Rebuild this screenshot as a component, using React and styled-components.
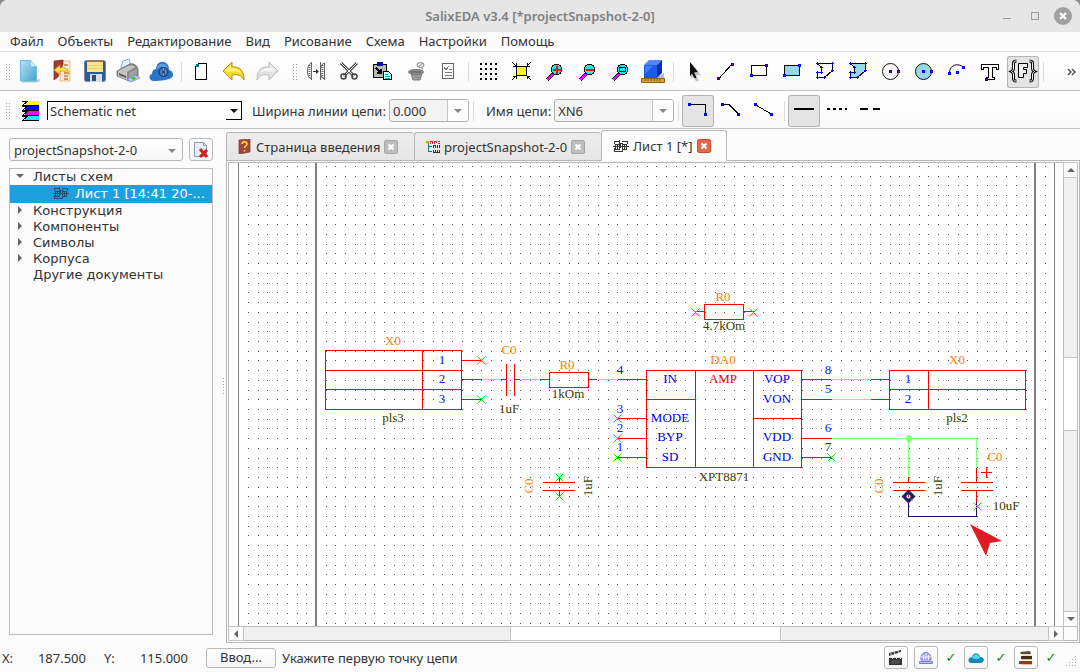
import React from "react";
import styled, { createGlobalStyle } from "styled-components";

const GlobalStyle = createGlobalStyle`
  * {
    box-sizing: border-box;
  }
  html, body, #root {
    height: 100%;
    margin: 0;
  }
  body {
    background: #8c8c8c;
    color: #333;
    font-family: "Noto Sans", "Open Sans", sans-serif;
    font-size: 13px;
  }
  button, input, select {
    font: inherit;
    color: inherit;
    margin: 0;
  }
`;

const Window = styled.div`
  display: flex;
  flex-direction: column;
  min-height: 100vh;
  background: #fbfbfb;
  border-radius: 8px 8px 0 0;
  overflow: hidden;
`;

const TitleBar = styled.header`
  display: grid;
  grid-template-columns: 1fr auto 1fr;
  align-items: center;
  height: 32px;
  padding: 0 7px;
  background: #e6e6e6;
`;

const Title = styled.h1`
  grid-column: 2;
  margin: 0;
  font-size: 13px;
  font-weight: 600;
  color: #808080;
`;

const WindowButtons = styled.div`
  display: flex;
  justify-content: flex-end;
  gap: 8px;
`;

const WindowButton = styled.button`
  display: flex;
  padding: 0;
  border: 0;
  background: none;
`;

const MenuBar = styled.nav`
  display: flex;
  gap: 14px;
  height: 20px;
  padding: 0 10px;
  border-bottom: 1px solid #dcdcdc;
`;

const MenuItem = styled.button`
  padding: 0;
  border: 0;
  background: none;
  line-height: 19px;
`;

const ToolBar = styled.div`
  display: flex;
  align-items: center;
  gap: 1px;
  height: ${props => (props.$tall ? 39 : 38)}px;
  padding-top: 2px;
  border-bottom: 1px solid #c2c2c2;
  background: linear-gradient(#fff, #f9f9f9);
`;

const ToolButton = styled.button`
  display: flex;
  flex: none;
  width: 32px;
  height: 32px;
  padding: 0;
  border: 0;
  border-radius: 3px;
  background: ${props => (props.$pressed ? "#e4e4e4" : "none")};
  box-shadow: ${props => (props.$pressed ? "inset 0 0 0 1px #b4b4b4" : "none")};
`;

const Separator = styled.span`
  flex: none;
  width: 6px;
  height: 20px;
  background: linear-gradient(#dcdcdc, #dcdcdc) 3px 0 / 1px 100% no-repeat;
`;

const Handle = styled.span`
  flex: none;
  align-self: center;
  width: ${props => (props.$inner ? 15 : 12)}px;
  height: 18px;
  padding-left: ${props => (props.$inner ? 8 : 5)}px;
  &::before {
    content: "";
    display: block;
    width: 5px;
    height: 17px;
    background: radial-gradient(circle, #aaa 1px, transparent 1px) 0 0 / 3px 3px;
  }
`;

const More = styled.button`
  display: flex;
  margin-left: auto;
  padding: 0 4px;
  border: 0;
  background: none;
`;

const LayerSelect = styled.div`
  position: relative;
  flex: none;
  width: 195px;
  height: 19px;
  border-top: 1px solid #000;
  border-left: 1px solid #000;
  background: #fff;
  select {
    appearance: none;
    width: 100%;
    height: 18px;
    padding: 0 20px 0 2px;
    border: 0;
    background: none;
    line-height: 18px;
  }
`;

const LayerArrow = styled.span`
  position: absolute;
  top: 0;
  right: 0;
  display: flex;
  align-items: center;
  justify-content: center;
  width: 16px;
  height: 18px;
  border-right: 1px solid #000;
  border-bottom: 1px solid #000;
  pointer-events: none;
`;

const FieldLabel = styled.label`
  flex: none;
  padding: 0 2px 0 9px;
  white-space: nowrap;
`;

const ComboBox = styled.div`
  display: flex;
  flex: none;
  width: ${props => props.$width}px;
  height: 23px;
  border: 1px solid #b2b2b2;
  border-radius: 3px;
  background: #f4f4f4;
  overflow: hidden;
  input {
    flex: 1;
    min-width: 0;
    padding: 0 3px;
    border: 0;
    background: none;
  }
  button {
    display: flex;
    align-items: center;
    justify-content: center;
    width: 21px;
    padding: 0;
    border: 0;
    border-left: 1px solid #c4c4c4;
    background: #fcfcfc;
  }
`;

const Main = styled.main`
  display: flex;
  flex: 1;
  min-height: 0;
`;

const SidePanel = styled.aside`
  display: flex;
  flex: none;
  flex-direction: column;
  gap: 7px;
  width: 213px;
  padding: 9px 0 8px 9px;
`;

const ProjectRow = styled.div`
  display: flex;
  gap: 6px;
`;

const ProjectSelect = styled.div`
  position: relative;
  flex: 1;
  select {
    appearance: none;
    width: 100%;
    height: 23px;
    padding: 0 4px;
    border: 1px solid #b8b8b8;
    border-radius: 3px;
    background: linear-gradient(#fff, #f6f6f6);
  }
  svg {
    position: absolute;
    right: 7px;
    top: 9px;
    pointer-events: none;
  }
`;

const SmallButton = styled.button`
  display: flex;
  align-items: center;
  justify-content: center;
  flex: none;
  width: 24px;
  height: 23px;
  padding: 0;
  border: 1px solid #b8b8b8;
  border-radius: 3px;
  background: linear-gradient(#fff, #f6f6f6);
`;

const Tree = styled.ul`
  flex: 1;
  margin: 0;
  padding: 0;
  border: 1px solid #bcbcbc;
  list-style: none;
  font-family: "DejaVu Sans", sans-serif;
`;

const TreeRow = styled.li`
  display: flex;
  align-items: center;
  height: ${props => (props.$selected ? 18 : 16)}px;
  padding-bottom: 2px;
  padding-left: ${props => (props.$selected ? 43 : 6)}px;
  gap: ${props => (props.$selected ? 6 : 9)}px;
  background: ${props => (props.$selected ? "#209fdf" : "none")};
  color: ${props => (props.$selected ? "#fff" : "#333")};
  white-space: nowrap;
`;

const Splitter = styled.div`
  display: flex;
  align-items: center;
  justify-content: flex-end;
  width: 13px;
  padding-right: 2px;
  &::before {
    content: "";
    width: 1px;
    height: 16px;
    background: repeating-linear-gradient(#aaa 0 1px, transparent 1px 3px);
  }
`;

const Workspace = styled.section`
  display: flex;
  flex: 1;
  flex-direction: column;
  min-width: 0;
  padding-top: 2px;
`;

const TabList = styled.div`
  display: flex;
  align-items: flex-end;
  height: 30px;
  border-bottom: 1px solid #b8b8b8;
`;

const Tab = styled.div`
  display: flex;
  flex: none;
  align-items: center;
  gap: 4px;
  width: ${props => props.$width}px;
  height: ${props => (props.$active ? 31 : 28)}px;
  margin-bottom: ${props => (props.$active ? -1 : 0)}px;
  padding: 0 11px;
  border: 1px solid #b8b8b8;
  border-bottom: 0;
  border-right-width: ${props => (props.$active ? 1 : 0)}px;
  border-radius: 3px 3px 0 0;
  background: ${props => (props.$active ? "#fcfcfc" : "linear-gradient(#ededed, #e6e6e6)")};
`;

const TabLabel = styled.button`
  display: flex;
  align-items: center;
  gap: 4px;
  padding: 0;
  border: 0;
  background: none;
  white-space: nowrap;
`;

const TabClose = styled.button`
  display: flex;
  padding: 0;
  border: 0;
  background: none;
`;

const Pane = styled.div`
  display: flex;
  flex: 1;
  min-height: 0;
  padding: 1px;
  border: 1px solid #b8b8b8;
  border-top: 0;
`;

const ScrollArea = styled.div`
  display: grid;
  flex: 1;
  grid-template-columns: minmax(0, 1fr) 14px;
  grid-template-rows: minmax(0, 1fr) 14px;
  border: 1px solid #b8b8b8;
`;

const Canvas = styled.svg`
  display: block;
  width: 100%;
  height: 100%;
  background: #fff;
  font-family: "Liberation Serif", serif;
  font-size: 13px;
  text-anchor: middle;
`;

const ScrollBar = styled.div`
  display: flex;
  flex-direction: ${props => (props.$vertical ? "column" : "row")};
  border: 0 solid #bcbcbc;
  border-left-width: ${props => (props.$vertical ? 1 : 0)}px;
  border-top-width: ${props => (props.$vertical ? 0 : 1)}px;
  background: #f0f0f0;
  button {
    display: flex;
    align-items: center;
    justify-content: center;
    flex: none;
    width: ${props => (props.$vertical ? 13 : 14)}px;
    height: ${props => (props.$vertical ? 14 : 13)}px;
    padding: 0;
    border: 0;
    background: #fcfcfc;
    box-shadow: 0 0 0 1px #c4c4c4;
  }
`;

const Track = styled.div`
  flex: ${props => props.$size} 0 0;
`;

const Thumb = styled.div`
  flex: ${props => props.$size} 0 0;
  background: #fff;
  box-shadow: 0 0 0 1px #c4c4c4;
`;

const Corner = styled.div`
  border: solid #bcbcbc;
  border-width: 1px 0 0 1px;
`;

const StatusBar = styled.footer`
  display: flex;
  align-items: center;
  height: 29px;
  padding: 0 2px;
`;

const Coordinate = styled.output`
  display: flex;
  justify-content: space-between;
  width: ${props => props.$width}px;
  margin-right: 18px;
`;

const PromptButton = styled.button`
  width: 70px;
  height: 20px;
  margin-right: 6px;
  padding: 0;
  border: 1px solid #b8b8b8;
  border-radius: 3px;
  background: linear-gradient(#fff, #f6f6f6);
  line-height: 17px;
`;

const Services = styled.div`
  display: flex;
  align-items: center;
  gap: 6px;
  margin-left: auto;
`;

const Check = styled.span`
  width: 14px;
  color: #0a8a0a;
  font-family: "DejaVu Sans", sans-serif;
  font-size: 13px;
  text-align: center;
`;

const Grip = styled.svg`
  align-self: flex-end;
`;

const Arrow = ({ dir = "down", color = "#666", size = 8 }) => {
  const turn = { down: 0, left: 90, up: 180, right: 270 }[dir];
  return (
    <svg width={size} height={size} viewBox="0 0 8 8" aria-hidden="true">
      <path d="M0 2h8L4 6z" fill={color} transform={`rotate(${turn} 4 4)`} />
    </svg>
  );
};

const Glyph = ({ children, crisp }) => (
  <svg
    width="32"
    height="32"
    viewBox="0 0 32 32"
    fill="none"
    shapeRendering={crisp ? "crispEdges" : "auto"}
    aria-hidden="true"
  >
    {children}
  </svg>
);

// square vertex markers of the drawing tools
const Node = ({ at, core = "#e00040" }) =>
  at.map(([x, y]) => (
    <g key={`${x}-${y}`}>
      <path d={`M${x - 1} ${y - 1}h3v3h-3z`} fill="#0000f0" />
      <path d={`M${x} ${y}h1v1h-1z`} fill={core} />
    </g>
  ));

const Magnifier = ({ children }) => (
  <Glyph crisp>
    <path d="M9 24l7-7" stroke="#000" strokeWidth="4" />
    <path d="M9 24l6-6" stroke="#f0f" strokeWidth="2" />
    <path d="M16 8h5v1h2v2h1v5h-1v2h-2v1h-5v-1h-2v-2h-1v-5h1V9h2z" fill="#000" />
    <path d="M16 9h5v1h1v1h1v5h-1v1h-1v1h-5v-1h-1v-1h-1v-5h1v-1h1z" fill="#1ee" />
    {children}
  </Glyph>
);

const Polygon = ({ fill }) => (
  <Glyph crisp>
    <path d="M8.500 7.500h15v7l-8 7h-7v-5h4v-5z" fill={fill} stroke="#000" />
    {[[8, 7], [23, 7], [12, 11], [8, 16], [12, 16], [23, 14], [15, 21], [8, 21]].map(([x, y]) => (
      <path key={`${x}-${y}`} d={`M${x - 1} ${y + 0.5}h3M${x + 0.5} ${y - 1}v3`} stroke="#0000f0" />
    ))}
  </Glyph>
);

const icons = {
  file: (
    <Glyph>
      <defs>
        <linearGradient id="fileFill" x2="1" y2="1">
          <stop stopColor="#b9e2f3" />
          <stop offset="1" stopColor="#3fa3cc" />
        </linearGradient>
      </defs>
      <path d="M10 24h14l3-1v2l-3 1.500H9z" fill="#c4c9cc" />
      <path d="M7.500 4.500h10l6 6V25h-16z" fill="url(#fileFill)" stroke="#6fbbdc" />
      <path d="M17.500 4.500v6h6z" fill="#d9f1fb" stroke="#8ccbe5" />
    </Glyph>
  ),
  open: (
    <Glyph>
      <path d="M14 5h10v20H14z" fill="#f6ecd8" stroke="#e4b987" />
      <path d="M18 9h4M18 14h4M18 17h4M18 20h4M18 23h4" stroke="#c8783b" strokeWidth="1.500" />
      <path d="M8 5l9-1v4l-5 13-4 3z" fill="#a03c38" stroke="#7a2624" strokeWidth=".7" />
      <path d="M8 14l6-5v3c5-1 8 1 9 6-3-3-5-3-9-3v4z" fill="#ffe14a" stroke="#c88e16" strokeWidth=".7" />
    </Glyph>
  ),
  save: (
    <Glyph>
      <rect x="5.500" y="4.500" width="21" height="21" rx="2" fill="#2a5c9c" stroke="#7d8597" />
      <path d="M8 5h16v11H8z" fill="#fbe68b" />
      <path d="M8 5.500h16" stroke="#b9683c" />
      <path d="M8 9.500h16M8 12.500h16" stroke="#efcb5c" />
      <path d="M11 18h12v8H11z" fill="#d8dde4" />
      <path d="M13 19h4v6h-4z" fill="#274f80" />
    </Glyph>
  ),
  print: (
    <Glyph>
      <path d="M9 12l2-7 6-2 2 8z" fill="#eaf4fc" stroke="#86abcf" />
      <path d="M5 15l7-4 6-3c4-1 8 2 8 6v6l-9 5-12-5z" fill="#8a8a8a" stroke="#666" strokeWidth=".8" />
      <path d="M6 15l8-4c4-2 7-2 9 0l-8 5v8l-9-4z" fill="#c4c4c4" />
      <path d="M7 17l7 3v2l-7-3z" fill="#555" />
      <path d="M17 17l8-4v5l-8 4z" fill="#a0a0a0" />
      <path d="M15 23l9-4 4 3-9 4z" fill="#aac8ef" stroke="#7989b0" strokeWidth=".7" />
      <path d="M19 22l4-1 1 2-3 1z" fill="#3db53d" />
      <path d="M23 21l3 1-2 1z" fill="#f0c83c" />
    </Glyph>
  ),
  cloud: (
    <Glyph>
      <path d="M9 25c-5 0-6-6-2-7 0-4 3-5 4-5 0-6 6-9 10-6 3 2 3 5 3 7 5 1 5 7 2 8-3 2-10 3-17 3z" fill="#2a74c9" />
      <path d="M11 14c1-6 7-8 10-5 1 1 2 3 1 4-3-4-8-2-11 1z" fill="#639ee4" />
      <circle cx="18.500" cy="16" r="4.500" fill="#2b5fa0" stroke="#1d4170" strokeWidth="1.200" />
      <path d="M18.500 12v8M15 16h7M16 13.500l5 5M21 13.500l-5 5" stroke="#9db9dd" strokeWidth=".8" />
      <circle cx="18.500" cy="16" r="1.500" fill="#173c69" />
    </Glyph>
  ),
  page: (
    <Glyph crisp>
      <path d="M14 7h8v17H10V11" fill="#fff" />
      <path d="M14 7.500h7.500v16h-11v-13z" stroke="#000" />
      <path d="M11 8h3v3h-3z" fill="#008080" />
    </Glyph>
  ),
  undo: (
    <Glyph>
      <path d="M5 15l9-9v5c8-1 12 4 12 13-3-5-6-6-12-5v5z" fill="#f9d92c" stroke="#b88c12" />
      <path d="M7 15l6-6v3c5 0 8 1 10 5-4-2-7-2-11-1z" fill="#fff07a" />
    </Glyph>
  ),
  redo: (
    <Glyph>
      <path d="M27 15l-9-9v5C10 10 6 15 6 24c3-5 6-6 12-5v5z" fill="#e2e2e2" stroke="#bcbcbc" />
      <path d="M25 15l-6-6v3c-5 0-8 1-10 5 4-2 7-2 11-1z" fill="#f3f3f3" />
    </Glyph>
  ),
  mirror: (
    <Glyph>
      <path d="M11.500 6v18M11.500 7c-3 1-4 4-4 8s1 7 4 8M20.500 6v18M24.500 7v17M24.500 7c-3 1-4 4-4 8s1 7 4 8" stroke="#555" strokeWidth=".9" />
      <path d="M9.500 9v13M22.500 9v13" stroke="#666" strokeDasharray="1 1" strokeWidth="2" />
      <path d="M13 15.500h5" stroke="#333" />
      <path d="M16 13l3 2.500-3 2.500z" fill="#333" />
    </Glyph>
  ),
  cut: (
    <Glyph>
      <path d="M8 7l13 13M24 7L11 20" stroke="#4c4c4c" strokeWidth="3" />
      <path d="M8 7l13 13M24 7L11 20" stroke="#f4f4f4" />
      <circle cx="10.500" cy="20.500" r="2.500" stroke="#444" strokeWidth="1.500" />
      <circle cx="21.500" cy="20.500" r="2.500" stroke="#444" strokeWidth="1.500" />
    </Glyph>
  ),
  paste: (
    <Glyph crisp>
      <path d="M7.500 8.500h13v13h-13z" fill="#b8b8b8" stroke="#000" />
      <path d="M11 6h6v4h-6z" fill="#0010a0" />
      <path d="M10 12l5 5M15 13v4h-4" stroke="#000" strokeWidth="2" />
      <path d="M17.500 15.500h5l3 3v5h-8z" fill="#dff" stroke="#000" />
      <path d="M19 18h3M19 20h5M19 22h5" stroke="#00a8d0" />
    </Glyph>
  ),
  bucket: (
    <Glyph>
      <path d="M12 17h11l-2 7h-7z" fill="#9a9a9a" stroke="#7a7a7a" />
      <ellipse cx="17" cy="16" rx="7.500" ry="2.500" fill="#8c8c8c" stroke="#777" />
      <path d="M12 16h10" stroke="#5a5a5a" />
      <ellipse cx="21.500" cy="9" rx="3.500" ry="2.500" fill="#eee" stroke="#888" />
      <path d="M19 11l5-4M23 12v2" stroke="#888" />
    </Glyph>
  ),
  list: (
    <Glyph crisp>
      <path d="M10.500 7.500h11v15h-11z" fill="#fff" stroke="#666" />
      <path d="M12 11l2 3 3-4M17 13.500h3M13 16.500h7M13 19.500h7" stroke="#777" />
    </Glyph>
  ),
  grid: (
    <Glyph crisp>
      {[7, 12, 17, 22].map(y => (
        <path key={y} d={`M8 ${y}h2v2h-2zM13 ${y}h2v2h-2zM18 ${y}h2v2h-2zM23 ${y}h2v2h-2z`} fill="#000" />
      ))}
    </Glyph>
  ),
  fit: (
    <Glyph crisp>
      <path d="M11.500 10.500h10v9h-10z" fill="#ff0" stroke="#000" />
      <path d="M7 6l4 4M26 6l-4 4M7 24l4-4M26 24l-4-4M8 10h3V7M25 10h-3V7M8 20h3v3M25 20h-3v3" stroke="#000" />
    </Glyph>
  ),
  zoomIn: (
    <Magnifier>
      <path d="M18 10h2v3h3v2h-3v3h-2v-3h-3v-2h3z" fill="#f01010" />
    </Magnifier>
  ),
  zoomOut: (
    <Magnifier>
      <path d="M15 13h8v2h-8z" fill="#f01010" />
    </Magnifier>
  ),
  zoomFit: (
    <Magnifier>
      <path d="M15.500 11.500h6v4h-6z" stroke="#000" />
    </Magnifier>
  ),
  cube: (
    <Glyph>
      <path d="M20 22l7-5v5l-5 2z" fill="#bbb" />
      <path d="M7 9h13v13H7z" fill="#2258ea" />
      <path d="M7 9l5-5h13l-5 5z" fill="#5287f8" />
      <path d="M20 9l5-5v13l-5 5z" fill="#102fae" />
      <path d="M8 10l8 0-8 8z" fill="#4579f5" />
      <path d="M4.500 22.500h23v4h-23z" fill="#d7a331" stroke="#8d6416" />
      <path d="M8 23v2M11 23v2M14 23v2M17 23v2M20 23v2M23 23v2" stroke="#7a5410" />
    </Glyph>
  ),
  pointer: (
    <Glyph>
      <path d="M15 8l9 11-5 .5 3 5-3 1-2.500-5-2.500 3z" fill="#c4c4c4" />
      <path d="M13 6l8 10-4 .5 2.500 5-2 1-2.500-5-2 3z" fill="#111" />
    </Glyph>
  ),
  line: (
    <Glyph crisp>
      <path d="M9 22.500L22 8" stroke="#000" />
      <Node at={[[8, 22], [22, 8]]} />
    </Glyph>
  ),
  rect: (
    <Glyph crisp>
      <path d="M8.500 9.500h15v10h-15z" fill="#fff" stroke="#000" />
      <Node at={[[8, 19], [23, 9]]} />
    </Glyph>
  ),
  rectFill: (
    <Glyph crisp>
      <path d="M8.500 9.500h15v10h-15z" fill="#94d8ea" stroke="#000" />
      <Node at={[[8, 19], [23, 9]]} />
    </Glyph>
  ),
  poly: <Polygon fill="#fff" />,
  polyFill: <Polygon fill="#94d8ea" />,
  circle: (
    <Glyph>
      <circle cx="15.500" cy="15.500" r="8" stroke="#111" />
      <Node at={[[15, 15], [23, 15]]} />
    </Glyph>
  ),
  circleFill: (
    <Glyph>
      <circle cx="15.500" cy="15.500" r="8" fill="#94d8ea" stroke="#111" />
      <Node at={[[15, 15], [23, 15]]} />
    </Glyph>
  ),
  arc: (
    <Glyph>
      <path d="M8.500 17c0-9 9-10 14-6" stroke="#111" />
      <Node at={[[8, 17], [22, 11], [16, 16]]} />
    </Glyph>
  ),
  text: (
    <Glyph crisp>
      <path d="M7.500 8.500h17v5h-2v-2h-4v10h2v2h-8v-2h2v-10h-5v2h-2z" fill="#fff" stroke="#000" />
      <Node at={[[12, 23]]} />
    </Glyph>
  ),
  formula: (
    <Glyph>
      <path d="M9.500 5c-3 0-3 1-3 4v3c0 2-1 3-2 3.500 1 .5 2 1.500 2 3.500v3c0 2 0 3 3 3M22.500 5c3 0 3 1 3 4v3c0 2 1 3 2 3.500-1 .5-2 1.500-2 3.500v3c0 2 0 3-3 3" stroke="#000" strokeWidth="3" />
      <path d="M9.500 5c-3 0-3 1-3 4v3c0 2-1 3-2 3.500 1 .5 2 1.500 2 3.500v3c0 2 0 3 3 3M22.500 5c3 0 3 1 3 4v3c0 2 1 3 2 3.500-1 .5-2 1.500-2 3.500v3c0 2 0 3-3 3" stroke="#fff" />
      <path d="M11.500 7.500h9v4h-4v2h3v4h-3v4h-5z" fill="#eee" stroke="#000" />
    </Glyph>
  ),
  wireCorner: (
    <Glyph crisp>
      <path d="M7 9.500h16.500v10" stroke="#000" />
      <Node core="#0000f0" at={[[7, 9], [23, 19]]} />
    </Glyph>
  ),
  wireBevel: (
    <Glyph crisp>
      <path d="M7 9.500h7l10 10" stroke="#000" />
      <Node core="#0000f0" at={[[7, 9], [23, 19]]} />
    </Glyph>
  ),
  wireFree: (
    <Glyph crisp>
      <path d="M7 9.500l17 10" stroke="#000" />
      <Node core="#0000f0" at={[[7, 9], [23, 19]]} />
    </Glyph>
  ),
  solid: (
    <Glyph crisp>
      <path d="M6 14h20" stroke="#000" strokeWidth="2" />
    </Glyph>
  ),
  dotted: (
    <Glyph crisp>
      <path d="M6 14h20" stroke="#000" strokeWidth="2" strokeDasharray="3 3" />
    </Glyph>
  ),
  dashed: (
    <Glyph crisp>
      <path d="M6 14h8M19 14h7" stroke="#000" strokeWidth="2" />
    </Glyph>
  ),
};

const LayersIcon = () => (
  <svg width="33" height="20" viewBox="0 0 33 20" shapeRendering="crispEdges" aria-hidden="true">
    {["#ff0", "#00f", "#f0f", "#0ff"].map((color, i) => (
      <g key={color} transform={`translate(9 ${i * 5 - 1})`}>
        <path d="M6 1h11v4H2z" fill={color} />
        <path d="M0 5.500h17M0 1.500h6M5 2l-4 3" stroke="#000" fill="none" />
      </g>
    ))}
  </svg>
);

const SheetIcon = ({ color = "#333" }) => (
  <svg width="16" height="14" viewBox="0 0 16 14" fill="none" stroke={color} shapeRendering="crispEdges" aria-hidden="true">
    <path d="M1.500 5V2.500h5M9 2.500h5.500V5M6.500 1v3h3M2.500 5.500h4v5h-4zM9.500 5.500h4v5h-4zM0 7.500h16M1.500 9v3.500h7.500V9M4.500 6v4M11.500 6v4M7.500 5v4" />
  </svg>
);

const HelpBookIcon = () => (
  <svg width="14" height="15" viewBox="0 0 14 15" aria-hidden="true">
    <path d="M1 1l11-1v13l-11 2z" fill="#a2473f" stroke="#7c332f" strokeWidth=".7" />
    <path d="M4 5c0-3 5-3 5 0 0 2-2.500 2-2.500 4M6.500 11v1.500" stroke="#ffdf36" strokeWidth="1.500" fill="none" />
  </svg>
);

const ProjectIcon = () => (
  <svg width="14" height="14" viewBox="0 0 14 14" fill="none" shapeRendering="crispEdges" aria-hidden="true">
    <path d="M0 1.500h3" stroke="#b8a400" strokeWidth="2" />
    <path d="M4.500 1v3M6.500 1v3M5 1.500h1M8.500 1v3M9 1.500h2M10.500 1v2M12 1.500h2M12 3.500h2" stroke="#c03040" />
    <path d="M2.500 3v9M2 6.500h4M2 11.500h4" stroke="#087878" />
    <path d="M7.500 5v3M9.500 5v3M8 5.500h1M11.500 5v3M13.500 5v3M7.500 10v3M9.500 10v3M11.500 10v3M13.500 10v3M8 12.500h5" stroke="#333" />
  </svg>
);

const CloseIcon = ({ active }) => (
  <svg width="14" height="14" viewBox="0 0 14 14" aria-hidden="true">
    <rect x=".5" y=".5" width="13" height="13" rx="1.500" fill={active ? "#e2694a" : "#bdbdbd"} stroke={active ? "#d44b2b" : "#a6a6a6"} />
    <path d="M4.500 4.500l5 5M9.500 4.500l-5 5" stroke="#fff" strokeWidth="2.200" />
  </svg>
);

const DeletePageIcon = () => (
  <svg width="18" height="18" viewBox="0 0 18 18" aria-hidden="true">
    <path d="M2.500 1.500h9l3 3v11h-12z" fill="#e7eef8" stroke="#8b99b0" />
    <path d="M11.500 1.500v3h3" fill="none" stroke="#8b99b0" />
    <path d="M8 8l7 8M15 9l-7 7" stroke="#d81c1c" strokeWidth="3" />
  </svg>
);

const MAIN_TOOLS = [
  ["file", "Новый"], ["open", "Открыть"], ["save", "Сохранить"], ["print", "Печать"], ["cloud", "Облако"], "sep",
  ["page", "Лист"], ["undo", "Отменить"], ["redo", "Повторить"], "handle",
  ["mirror", "Отразить"], ["cut", "Вырезать"], ["paste", "Вставить"], ["bucket", "Удалить"], ["list", "Свойства"], "sep",
  ["grid", "Сетка"], ["fit", "Вписать"], ["zoomIn", "Увеличить"], ["zoomOut", "Уменьшить"], ["zoomFit", "Окно"], ["cube", "3D"], "sep",
  ["pointer", "Выбор"], ["line", "Линия"], ["rect", "Прямоугольник"], ["rectFill", "Заполненный прямоугольник"],
  ["poly", "Полигон"], ["polyFill", "Заполненный полигон"], ["circle", "Окружность"], ["circleFill", "Круг"],
  ["arc", "Дуга"], ["text", "Текст"], ["formula", "Цепь", true], "sep",
];

const WIRE_TOOLS = [
  ["wireCorner", "Прямой угол", true], ["wireBevel", "Скос"], ["wireFree", "Произвольно"], "sep",
  ["solid", "Сплошная", true], ["dotted", "Точечная"], ["dashed", "Пунктир"],
];

const MENU = ["Файл", "Объекты", "Редактирование", "Вид", "Рисование", "Схема", "Настройки", "Помощь"];
const FOLDERS = ["Конструкция", "Компоненты", "Символы", "Корпуса"];

function Tools({ items }) {
  return items.map((item, i) => {
    if (item === "sep") return <Separator key={i} />;
    if (item === "handle") return <Handle key={i} $inner />;
    const [name, label, pressed] = item;
    return (
      <ToolButton key={name} aria-label={label} $pressed={pressed}>
        {icons[name]}
      </ToolButton>
    );
  });
}

const STEP = 9.72;
const gridPath = () => {
  let d = "";
  for (let row = 0; row < 48; row++) {
    for (let col = 0; col < 83; col++) {
      d += `M${Math.round(248 + col * STEP) - 0.5} ${Math.round(166 + row * STEP)}h1`;
    }
  }
  return d;
};
const GRID = gridPath();

const LABELS = [
  ["X0", 393, 345, "name"], ["C0", 509, 354, "name"], ["R0", 567, 369, "name"], ["R0", 723, 301, "name"],
  ["DA0", 723, 364, "name"], ["X0", 957, 364, "name"], ["C0", 995, 461, "name"],
  ["C0", 533, 486, "name", true], ["C0", 883, 486, "name", true],
  ["pls3", 393, 422, "value"], ["1uF", 509, 413, "value"], ["1kOm", 568, 398, "value"], ["4.7kOm", 724, 330, "value"],
  ["XPT8871", 724, 481, "value"], ["pls2", 957, 422, "value"], ["10uF", 1006, 510, "value"],
  ["1uF", 592, 486, "value", true], ["1uF", 942, 486, "value", true],
  ["1", 442, 364, "pin"], ["2", 442, 383, "pin"], ["3", 442, 403, "pin"],
  ["4", 620, 374, "pin"], ["3", 620, 413, "pin"], ["2", 620, 432, "pin"], ["1", 620, 451, "pin"],
  ["8", 828, 374, "pin"], ["5", 828, 393, "pin"], ["6", 828, 432, "pin"], ["7", 828, 451, "pin"],
  ["1", 908, 383, "pin"], ["2", 908, 403, "pin"],
  ["IN", 670, 383, "port"], ["MODE", 670, 422, "port"], ["BYP", 670, 441, "port"], ["SD", 670, 461, "port"],
  ["VOP", 777, 383, "port"], ["VON", 777, 403, "port"], ["VDD", 777, 441, "port"], ["GND", 777, 461, "port"],
  ["AMP", 723, 383, "title"],
];

const INK = { name: "#ff8000", value: "#404000", pin: "#0020ff", port: "#0000e6", title: "#e60000" };

const FREE_PINS = [
  [481, 360], [481, 399], [617, 418], [617, 438], [617, 457], [559, 477], [559, 496],
  [695, 312], [753, 312], [831, 457], [977, 506],
];

function Schematic() {
  return (
    <Canvas role="img" aria-label="Лист 1">
      <g transform="translate(-228.500 -162.500)" fill="none">
        <g shapeRendering="crispEdges">
          <path d={GRID} stroke="#555" />
          <path d="M238 160v2000M1054 160v2000" stroke="#808080" />
          <path d="M315.500 160v2000M1034.500 160v2000" stroke="#808080" strokeWidth="2" />
          <path
            d="M481 379h20M520 379h20M597 379h21M831 379h40M831 399h40M831 438h145v30M908 438v39"
            stroke="#80ff80"
          />
          <g stroke="#f00" strokeLinecap="square">
            <path d="M325 350h136v59H325zM325 370h136M325 389h136M422 350v59M461 360h20M461 379h20M461 399h20" />
            <path d="M501 379h5M506 364v31M514 364v31M514 379h5M540 379h9M549 372h39v15h-39zM588 379h8" />
            <path d="M543 482h31M543 490h31M559 477v5M559 490v6" />
            <path d="M704 304h39v15h-39zM695 311h9M743 311h10" />
            <path d="M646 370h155v97H646zM695 370v97M753 370v97M646 399h49M753 418h48" />
            <path d="M618 379h28M617 418h29M617 438h29M617 457h29M801 379h29M801 399h29M801 438h29M801 457h30" />
            <path d="M871 379h18M871 399h18M889 370h136v39H889zM889 389h136M928 370v39" />
            <path d="M908 477v5M893 482h31M893 490h31M908 490v6M976 468v14M961 482h31M961 490h31M976 490v16M981 472h10M986 467v10" />
          </g>
          <path d="M908 496v20h68v-15" stroke="#1c1468" />
        </g>
        {FREE_PINS.map(([x, y]) => (
          <path key={`${x}-${y}`} d={`M${x - 4} ${y - 4}l8 8M${x + 4} ${y - 4}l-8 8`} stroke="#00e600" />
        ))}
        <circle cx="908.500" cy="438" r="3.200" fill="#80ff80" />
        <path d="M908 489l7 7-7 7-7-7z" fill="#251b6c" />
        <circle cx="908" cy="496" r="2" fill="#fff" />
        <path d="M908 494v3" stroke="#e02020" />
        <path d="M910 498l2 2" stroke="#00c000" />
      </g>
      <g transform="translate(-229 -163)">
        {LABELS.map(([text, x, y, kind, upright]) => (
          <text key={`${x}-${y}`} x={x} y={y} fill={INK[kind]} transform={upright ? `rotate(-90 ${x} ${y})` : undefined}>
            {text}
          </text>
        ))}
        <path d="M970 524l32 17-12 2-4 13z" fill="#e01b24" />
      </g>
    </Canvas>
  );
}

function App() {
  return (
    <Window>
      <GlobalStyle />
      <TitleBar>
        <Title>SalixEDA v3.4 [*projectSnapshot-2-0]</Title>
        <WindowButtons>
          <WindowButton aria-label="Свернуть">
            <svg width="20" height="20" viewBox="0 0 20 20"><path d="M6 12.500h8" stroke="#999" /></svg>
          </WindowButton>
          <WindowButton aria-label="Развернуть">
            <svg width="20" height="20" viewBox="0 0 20 20"><path d="M6.500 6.500h7v7h-7z" fill="none" stroke="#999" /></svg>
          </WindowButton>
          <WindowButton aria-label="Закрыть">
            <svg width="20" height="20" viewBox="0 0 20 20">
              <circle cx="10" cy="10" r="9" fill="#a0a0a0" />
              <path d="M7 7l6 6M13 7l-6 6" stroke="#fff" strokeWidth="2.200" />
            </svg>
          </WindowButton>
        </WindowButtons>
      </TitleBar>
      <MenuBar>
        {MENU.map(item => (
          <MenuItem key={item}>{item}</MenuItem>
        ))}
      </MenuBar>
      <ToolBar $tall>
        <Handle />
        <Tools items={MAIN_TOOLS} />
        <More aria-label="Ещё">
          <svg width="9" height="8" viewBox="0 0 9 8" fill="none" stroke="#444" aria-hidden="true">
            <path d="M1 1l3 3-3 3M5 1l3 3-3 3" strokeWidth="1.300" />
          </svg>
        </More>
      </ToolBar>
      <ToolBar>
        <Handle />
        <LayersIcon />
        <LayerSelect>
          <select aria-label="Слой">
            <option>Schematic net</option>
          </select>
          <LayerArrow>
            <Arrow color="#111" />
          </LayerArrow>
        </LayerSelect>
        <FieldLabel htmlFor="wire-width">Ширина линии цепи:</FieldLabel>
        <ComboBox $width={80}>
          <input id="wire-width" defaultValue="0.000" />
          <button aria-label="Выбрать ширину"><Arrow color="#888" /></button>
        </ComboBox>
        <Separator />
        <FieldLabel htmlFor="wire-name">Имя цепи:</FieldLabel>
        <ComboBox $width={120}>
          <input id="wire-name" defaultValue="XN6" />
          <button aria-label="Выбрать имя"><Arrow color="#888" /></button>
        </ComboBox>
        <Separator />
        <Tools items={WIRE_TOOLS} />
      </ToolBar>
      <Main>
        <SidePanel>
          <ProjectRow>
            <ProjectSelect>
              <select aria-label="Проект">
                <option>projectSnapshot-2-0</option>
              </select>
              <Arrow color="#888" />
            </ProjectSelect>
            <SmallButton aria-label="Закрыть проект">
              <DeletePageIcon />
            </SmallButton>
          </ProjectRow>
          <Tree>
            <TreeRow>
              <Arrow />
              Листы схем
            </TreeRow>
            <TreeRow $selected>
              <SheetIcon color="#1d4f70" />
              Лист 1 [14:41 20-...
            </TreeRow>
            {FOLDERS.map(folder => (
              <TreeRow key={folder}>
                <Arrow dir="right" />
                {folder}
              </TreeRow>
            ))}
            <TreeRow>
              <Arrow color="none" />
              Другие документы
            </TreeRow>
          </Tree>
        </SidePanel>
        <Splitter />
        <Workspace>
          <TabList>
            <Tab $width={188}>
              <TabLabel><HelpBookIcon />Страница введения</TabLabel>
              <TabClose aria-label="Закрыть вкладку"><CloseIcon /></TabClose>
            </Tab>
            <Tab $width={187}>
              <TabLabel><ProjectIcon />projectSnapshot-2-0</TabLabel>
              <TabClose aria-label="Закрыть вкладку"><CloseIcon /></TabClose>
            </Tab>
            <Tab $width={126} $active>
              <TabLabel><SheetIcon />Лист 1 [*]</TabLabel>
              <TabClose aria-label="Закрыть вкладку"><CloseIcon active /></TabClose>
            </Tab>
          </TabList>
          <Pane>
            <ScrollArea>
              <Schematic />
              <ScrollBar $vertical>
                <button aria-label="Вверх"><Arrow dir="up" /></button>
                <Track $size={181} />
                <Thumb $size={73} />
                <Track $size={182} />
                <button aria-label="Вниз"><Arrow /></button>
              </ScrollBar>
              <ScrollBar>
                <button aria-label="Влево"><Arrow dir="left" /></button>
                <Track $size={268} />
                <Thumb $size={269} />
                <Track $size={269} />
                <button aria-label="Вправо"><Arrow dir="right" /></button>
              </ScrollBar>
              <Corner />
            </ScrollArea>
          </Pane>
        </Workspace>
      </Main>
      <StatusBar>
        <Coordinate $width={84}><span>X:</span><span>187.500</span></Coordinate>
        <Coordinate $width={84}><span>Y:</span><span>115.000</span></Coordinate>
        <PromptButton>Ввод...</PromptButton>
        <span>Укажите первую точку цепи</span>
        <Services>
          <SmallButton aria-label="Запись">
            <svg width="16" height="16" viewBox="0 0 16 16">
              <path d="M1 7h13v8H1z" fill="#333" />
              <path d="M1 6l12-4v-2L1 3z" fill="#333" />
              <path d="M3 5.500V3M7 4.500l-1-3M11 3L10 1M1 7.500h13M3 7l2 2M7 7l2 2M11 7l2 2" stroke="#ddd" />
              <path d="M3 11h9M3 13h9" stroke="#666" />
            </svg>
          </SmallButton>
          <SmallButton aria-label="Сервер">
            <svg width="16" height="14" viewBox="0 0 16 14">
              <path d="M3 9c-1-10 11-10 10 0z" fill="#a9a9ff" stroke="#7777ee" />
              <path d="M5.500 9V4M8 9V2M10.500 9V4M3 6h10" stroke="#eef" />
              <path d="M1.500 10.500h13v2h-13z" fill="#c4c4ff" stroke="#7777ee" />
            </svg>
          </SmallButton>
          <Check>✓</Check>
          <SmallButton aria-label="Облако">
            <svg width="16" height="14" viewBox="0 0 16 14">
              <path d="M3 12c-4-1-3-6 1-6 1-5 7-5 8 0 5 0 5 5 1 6z" fill="#1085b7" />
              <path d="M4 7c2-5 6-5 8 0-3 2-5 1-8 0z" fill="#5cd2f0" />
            </svg>
          </SmallButton>
          <Check>✓</Check>
          <SmallButton aria-label="Библиотека">
            <svg width="16" height="16" viewBox="0 0 16 16">
              <path d="M2 2l10-1 1 3H3z" fill="#4d5238" />
              <path d="M3 6h11v3H3z" fill="#3d2c1c" />
              <path d="M1 11h13v3H1z" fill="#9c3328" />
              <path d="M4 5h9M4 9.500h10M3 14.500h11" stroke="#dcc491" />
            </svg>
          </SmallButton>
          <Check>✓</Check>
          <Grip width="14" height="14" viewBox="0 0 14 14" fill="#b0b0b0" aria-hidden="true">
            <path d="M11 1h1v1h-1zM8 4h1v1h-1zM11 4h1v1h-1zM5 7h1v1h-1zM8 7h1v1h-1zM11 7h1v1h-1zM2 10h1v1h-1zM5 10h1v1h-1zM8 10h1v1h-1zM11 10h1v1h-1z" />
          </Grip>
        </Services>
      </StatusBar>
    </Window>
  );
}

export default App;
